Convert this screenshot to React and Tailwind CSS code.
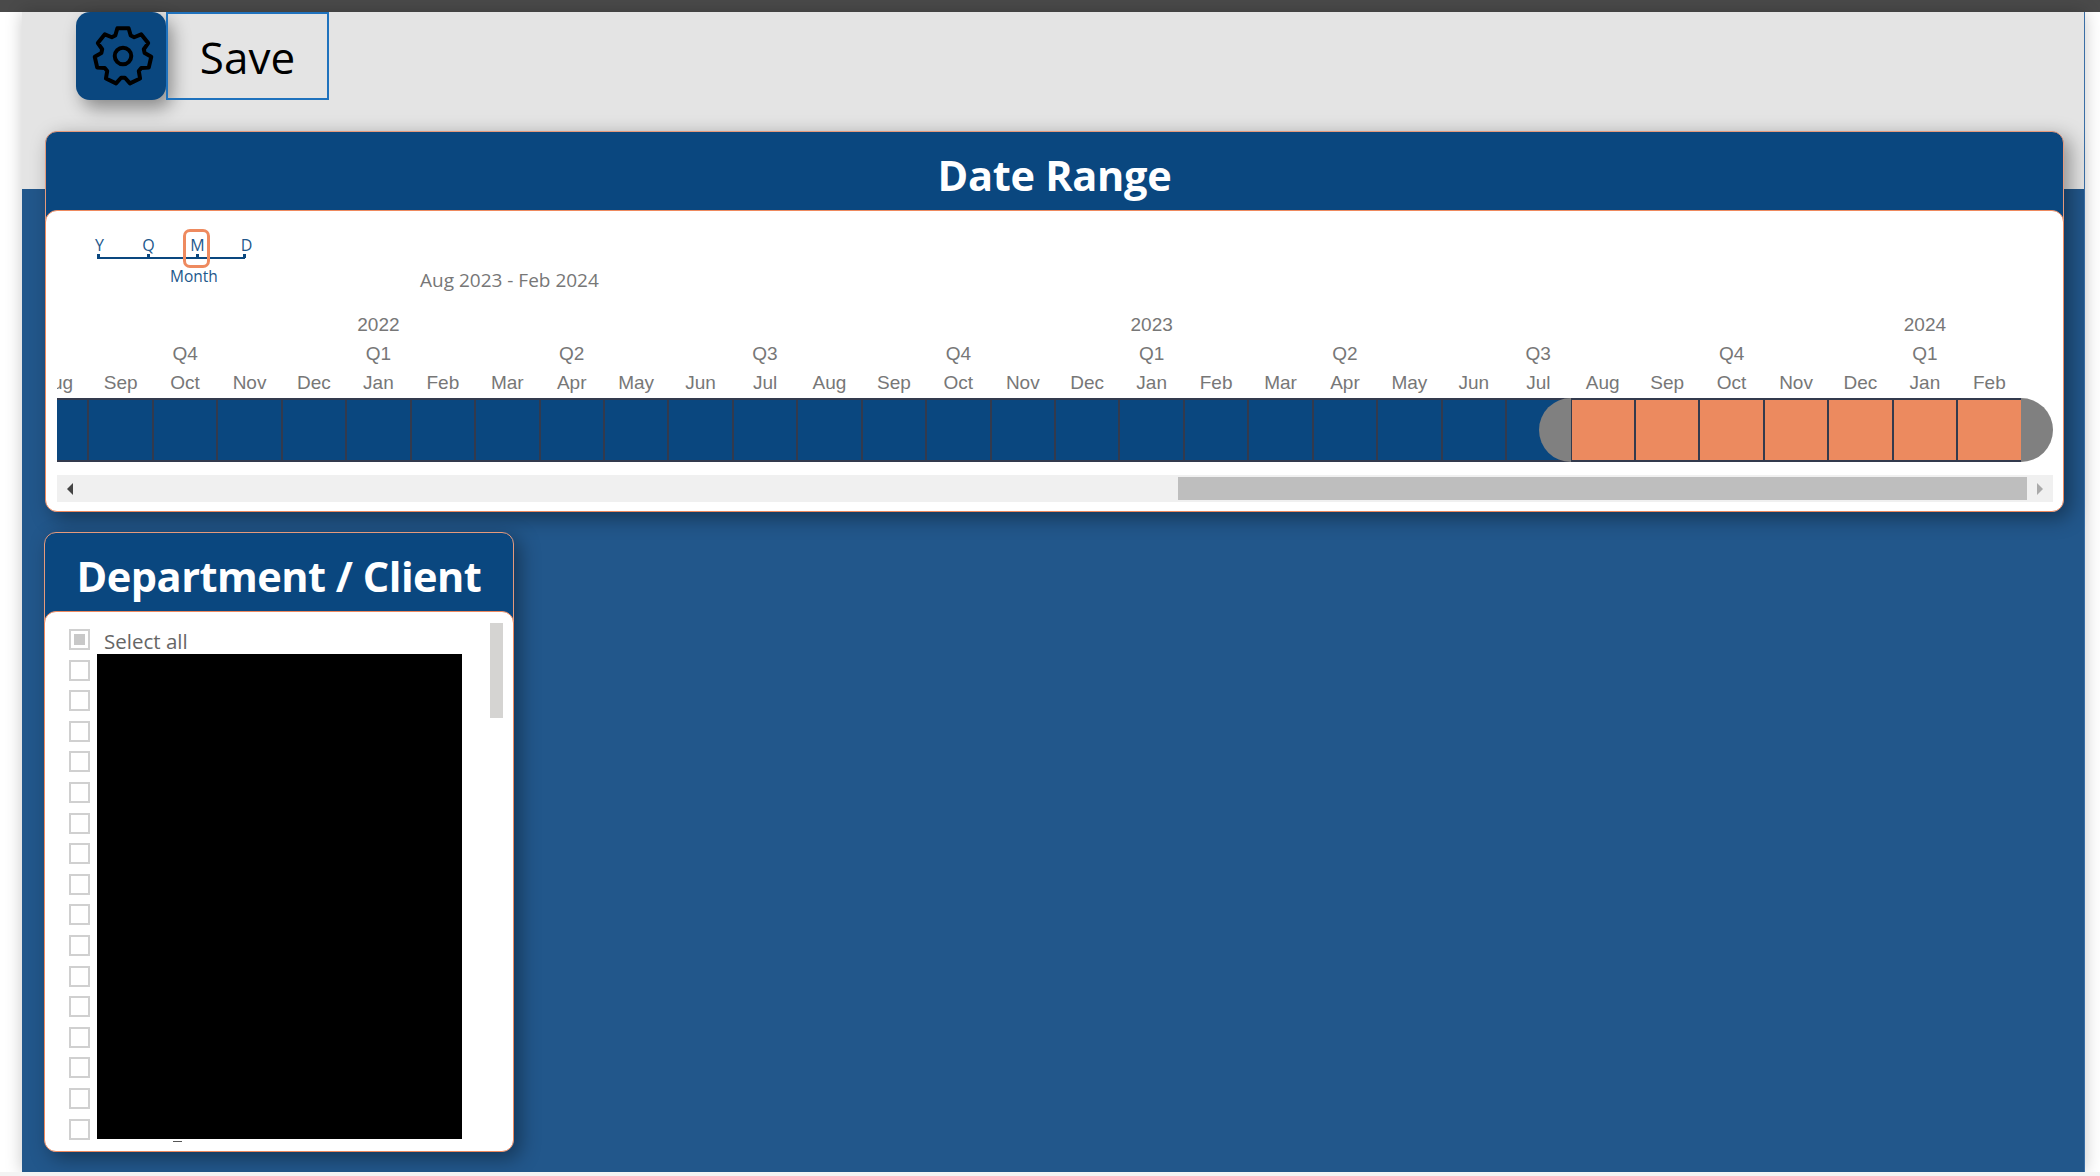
import React from "react";

const months = ["Aug","Sep","Oct","Nov","Dec","Jan","Feb","Mar","Apr","May","Jun","Jul"];
// Aug 2021 -> Feb 2024, 31 columns
const cols = [...Array(31)].map((_, i) => {
    const name = months[i % 12];
    const year = name === "Jan" ? 2022 + Math.floor(i / 12) : "";
    const quarter = { Oct: "Q4", Jan: "Q1", Apr: "Q2", Jul: "Q3" }[name] || "";
    return { name, year, quarter, picked: i >= 24 };
});

// 7 teeth, one on top and a notch at the bottom
const gearPath = () => {
    const pts = [];
    for (let t = 0; t < 7; t++) {
        const a = (t / 7) * Math.PI * 2 - Math.PI / 2;
        [[8.2, -0.36], [10.6, -0.2], [10.6, 0.2], [8.2, 0.36]].forEach(([r, d]) => {
            pts.push(`${(12 + r * Math.cos(a + d)).toFixed(2)} ${(12 + r * Math.sin(a + d)).toFixed(2)}`);
        });
    }
    return "M" + pts.join("L") + "Z";
};

const Gear = () => (
    <svg width="64" height="64" viewBox="0 0 24 24" fill="none" stroke="black" strokeWidth="1.5" strokeLinejoin="round" className="ml-[3px]">
        <path d={gearPath()} />
        <circle cx="12" cy="12" r="3.100" />
    </svg>
);

const Check = ({ on }) => (
    <div className="w-[21px] h-[21px] border-2 border-[#d0d0d0] flex items-center justify-center shrink-0">
        {on && <div className="w-[11px] h-[11px] bg-[#c8c8c8]"></div>}
    </div>
);

const Panel = ({ title, className, titleClass, children }) => (
    <div className={`${className} rounded-[12px] shadow-[6px_6px_20px_rgba(0,0,0,0.38)]`}>
        <div className="h-[90px] bg-[#0a477f] border border-[#e59a7c] rounded-t-[12px] flex items-center justify-center">
            <h2 className={`${titleClass} text-white font-bold text-[41.5px] leading-none font-['Open_Sans',sans-serif]`}>{title}</h2>
        </div>
        <div className="relative -mt-[11px] bg-white border border-[#ee8a5f] rounded-[12px]">{children}</div>
    </div>
);

const Scale = () => (
    <div className="relative w-[200px] h-[68px] ml-[40px] text-[#22578b] font-['Open_Sans',sans-serif]">
        <div className="flex w-[200px] -ml-[22px] pt-[26px] text-[16px] leading-[17px] text-center">
            {["Y", "Q", "M", "D"].map(l => <span key={l} className="w-[49px]">{l}</span>)}
        </div>
        <div className="absolute left-0 top-[46px] w-[148px] h-[2px] bg-[#0a477f]"></div>
        {[0, 50, 99, 146].map(x => (
            <div key={x} style={{ left: x }} className="absolute top-[43px] w-[3px] h-[4px] bg-[#0a477f]"></div>
        ))}
        <div className="absolute left-[73px] top-[58px] text-[15.500px] leading-none w-[100px]">Month</div>
        <div className="absolute left-[86px] top-[18px] w-[27px] h-[39px] border-[3px] border-[#ee8a5f] rounded-[7px]"></div>
    </div>
);

export default function App() {
    return (
        <div className="w-[2100px] h-[1176px] overflow-hidden bg-white flex flex-col">
            <div className="h-3 bg-[#4a4a4a] shrink-0"></div>
            <div className="flex-1 flex min-h-0">
                <div className="w-[22px] shrink-0"></div>
                <div className="w-[2063px] pl-[23px] border-r border-[#3a6ea5] shadow-[0_0_16px_rgba(0,0,0,0.22)] bg-[linear-gradient(#e4e4e4_177px,#22578b_177px)]">
                    <div className="flex h-[88px] ml-[31px]">
                        <div className="w-[90px] h-[88px] bg-[#0a477f] rounded-[14px] flex items-center justify-center shadow-[6px_8px_18px_rgba(0,0,0,0.4)]">
                            <Gear />
                        </div>
                        <div className="w-[163px] h-[88px] pt-[2px] border-2 border-[#1f72bd] flex items-center justify-center text-black text-[44px] leading-none font-['Open_Sans',sans-serif]">Save</div>
                    </div>
                    <Panel title="Date Range" titleClass="tracking-[-0.3px]" className="w-[2019px] mt-[31px]">
                        <div className="h-[300px] pl-[11px] font-['Liberation_Sans',sans-serif] text-[#777] text-[19px]">
                            <div className="relative h-[99px]">
                                <Scale />
                                <div className="absolute left-[363px] top-[57px] text-[19px] leading-6 font-['Open_Sans',sans-serif]">Aug 2023 - Feb 2024</div>
                            </div>
                            <div className="w-[1996px] overflow-hidden">
                                <div className="flex w-[1964px] -ml-[33px]">
                                    {cols.map((c, i) => (
                                        <div key={i} className="w-[64.450px] shrink-0 flex flex-col items-center leading-[29px]">
                                            <span className="h-[29px]">{c.year}</span>
                                            <span className="h-[29px]">{c.quarter}</span>
                                            <span className="h-[29px]">{c.name}</span>
                                        </div>
                                    ))}
                                </div>
                            </div>
                            <div className="relative w-[1996px] h-[64px] mt-px">
                                <div className="overflow-hidden w-[1964px] h-[64px]">
                                    <div className="flex -ml-[32px]">
                                        {cols.map((c, i) => (
                                            <div key={i} className={`w-[64.450px] h-[64px] shrink-0 border-r-2 border-y-2 border-[#333a4d] ${c.picked ? "bg-[#ec8a5f]" : "bg-[#0a477f]"}`}></div>
                                        ))}
                                    </div>
                                </div>
                                <div className="absolute left-[1482px] top-0 w-[32px] h-[64px] bg-[#808080] rounded-l-[32px]"></div>
                                <div className="absolute left-[1964px] top-0 w-[32px] h-[64px] bg-[#808080] rounded-r-[32px]"></div>
                            </div>
                            <div className="w-[1996px] h-[27px] mt-[13px] bg-[#f0f0f0] flex items-center">
                                <span className="w-[26px] flex justify-center">
                                    <span className="w-0 h-0 border-y-[6px] border-y-transparent border-r-[6px] border-r-[#444]"></span>
                                </span>
                                <div className="w-[849px] h-[23px] ml-[1095px] bg-[#bebebe]"></div>
                                <span className="w-[26px] flex justify-center">
                                    <span className="w-0 h-0 border-y-[6px] border-y-transparent border-l-[6px] border-l-[#aaa]"></span>
                                </span>
                            </div>
                        </div>
                    </Panel>
                    <Panel title="Department / Client" titleClass="tracking-[-0.5px]" className="w-[470px] mt-[20px] -ml-[1px]">
                        <div className="relative h-[539px] pl-[24px] pt-[17px]">
                            <div className="flex flex-col gap-[9.600px]">
                                {[...Array(17)].map((_, i) => (
                                    <div key={i} className="flex items-center gap-[14px] h-[21px]">
                                        <Check on={i === 0} />
                                        {i === 0 && <span className="text-[20.500px] leading-none mt-[3px] text-[#666] font-['Open_Sans',sans-serif]">Select all</span>}
                                    </div>
                                ))}
                            </div>
                            <div className="absolute left-[52px] top-[42px] w-[365px] h-[485px] bg-black"></div>
                            <div className="absolute left-[128px] top-[529px] w-[9px] h-px bg-[#555]"></div>
                            <div className="absolute left-[445px] top-[11px] w-[13px] h-[95px] bg-[#d5d4d2]"></div>
                        </div>
                    </Panel>
                </div>
            </div>
            <div className="h-1 bg-[#f3f3f3] shrink-0"></div>
        </div>
    );
}
